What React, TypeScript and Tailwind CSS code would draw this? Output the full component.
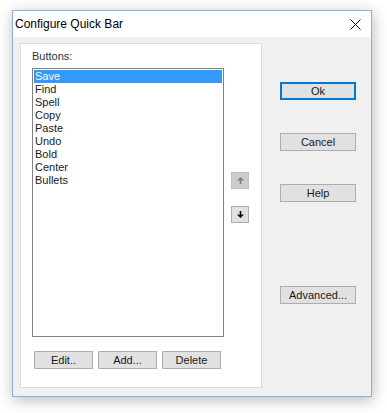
const items = ["Save", "Find", "Spell", "Copy", "Paste", "Undo", "Bold", "Center", "Bullets"];

function Btn({ label, primary, className = "" }: { label: string; primary?: boolean; className?: string }) {
    return (
        <button
            className={`h-[18px] bg-[#e1e1e1] text-[11px] leading-none text-[#1a1a1a] ${
                primary ? "border-2 border-[#0078d7]" : "border border-[#adadad]"
            } ${className}`}
        >
            {label}
        </button>
    );
}

function Arrow({ down, color }: { down?: boolean; color: string }) {
    return (
        <svg width="9" height="9" viewBox="0 0 9 9" className={down ? "rotate-180" : ""}>
            <path d="M4.5 1 L8 4.6 L6 4.6 L5.3 3.8 L5.3 8 L3.7 8 L3.7 3.8 L3 4.6 L1 4.6 Z" fill={color} />
        </svg>
    );
}

export default function App() {
    return (
        <div
            className="w-[387px] h-[413px] bg-white pl-[12px] pt-[10px]"
            style={{ fontFamily: '"Liberation Sans", Arial, sans-serif' }}
        >
            <div className="w-[360px] h-[387px] flex flex-col border border-[#86b1e0] bg-[#f0f0f0] shadow-[1px_3px_14px_rgba(0,0,0,0.28)]">
                {/* TITLE BAR */}
                <div className="h-[26px] bg-white flex items-center justify-between pl-[2px] pr-[10px]">
                    <span className="text-[12px] text-black">Configure Quick Bar</span>
                    <svg width="11" height="11" viewBox="0 0 11 11">
                        <path d="M0.5 0.5 L10.5 10.5 M10.5 0.5 L0.5 10.5" stroke="#000" strokeWidth="1" />
                    </svg>
                </div>

                {/* BODY */}
                <div className="flex-1 flex pt-[6px] pl-[7px] pb-[8px]">
                    {/* PANEL */}
                    <div className="w-[242px] bg-white border border-[#dcdcdc] flex flex-col pl-[11px] pt-[6px]">
                        <span className="text-[11px] leading-[13px] text-[#333]">Buttons:</span>
                        <div className="flex mt-[5px]">
                            <div className="w-[192px] h-[269px] border border-[#828282] p-[1px]">
                                {items.map((it, i) => (
                                    <div
                                        key={it}
                                        className={`h-[13px] text-[11px] leading-[13px] pl-[1px] ${
                                            i === 0 ? "bg-[#3399ff] text-white" : "text-[#1a1a1a]"
                                        }`}
                                    >
                                        {it}
                                    </div>
                                ))}
                            </div>
                            <div className="flex flex-col ml-[7px] mt-[104px] gap-[17px]">
                                <div className="w-[18px] h-[17px] bg-[#cccccc] border border-[#bfbfbf] flex items-center justify-center">
                                    <Arrow color="#7a7a7a" />
                                </div>
                                <div className="w-[18px] h-[17px] bg-[#e1e1e1] border border-[#adadad] flex items-center justify-center">
                                    <Arrow down color="#000" />
                                </div>
                            </div>
                        </div>
                        <div className="flex gap-[5px] mt-[14px] ml-[2px]">
                            <Btn label="Edit.." className="w-[59px]" />
                            <Btn label="Add..." className="w-[59px]" />
                            <Btn label="Delete" className="w-[59px]" />
                        </div>
                    </div>

                    {/* RIGHT BUTTONS */}
                    <div className="flex flex-col ml-[18px] pt-[39px]">
                        <Btn label="Ok" primary className="w-[76px]" />
                        <Btn label="Cancel" className="w-[76px] mt-[33px]" />
                        <Btn label="Help" className="w-[76px] mt-[33px]" />
                        <Btn label="Advanced..." className="w-[76px] mt-[84px]" />
                    </div>
                </div>
            </div>
        </div>
    );
}
